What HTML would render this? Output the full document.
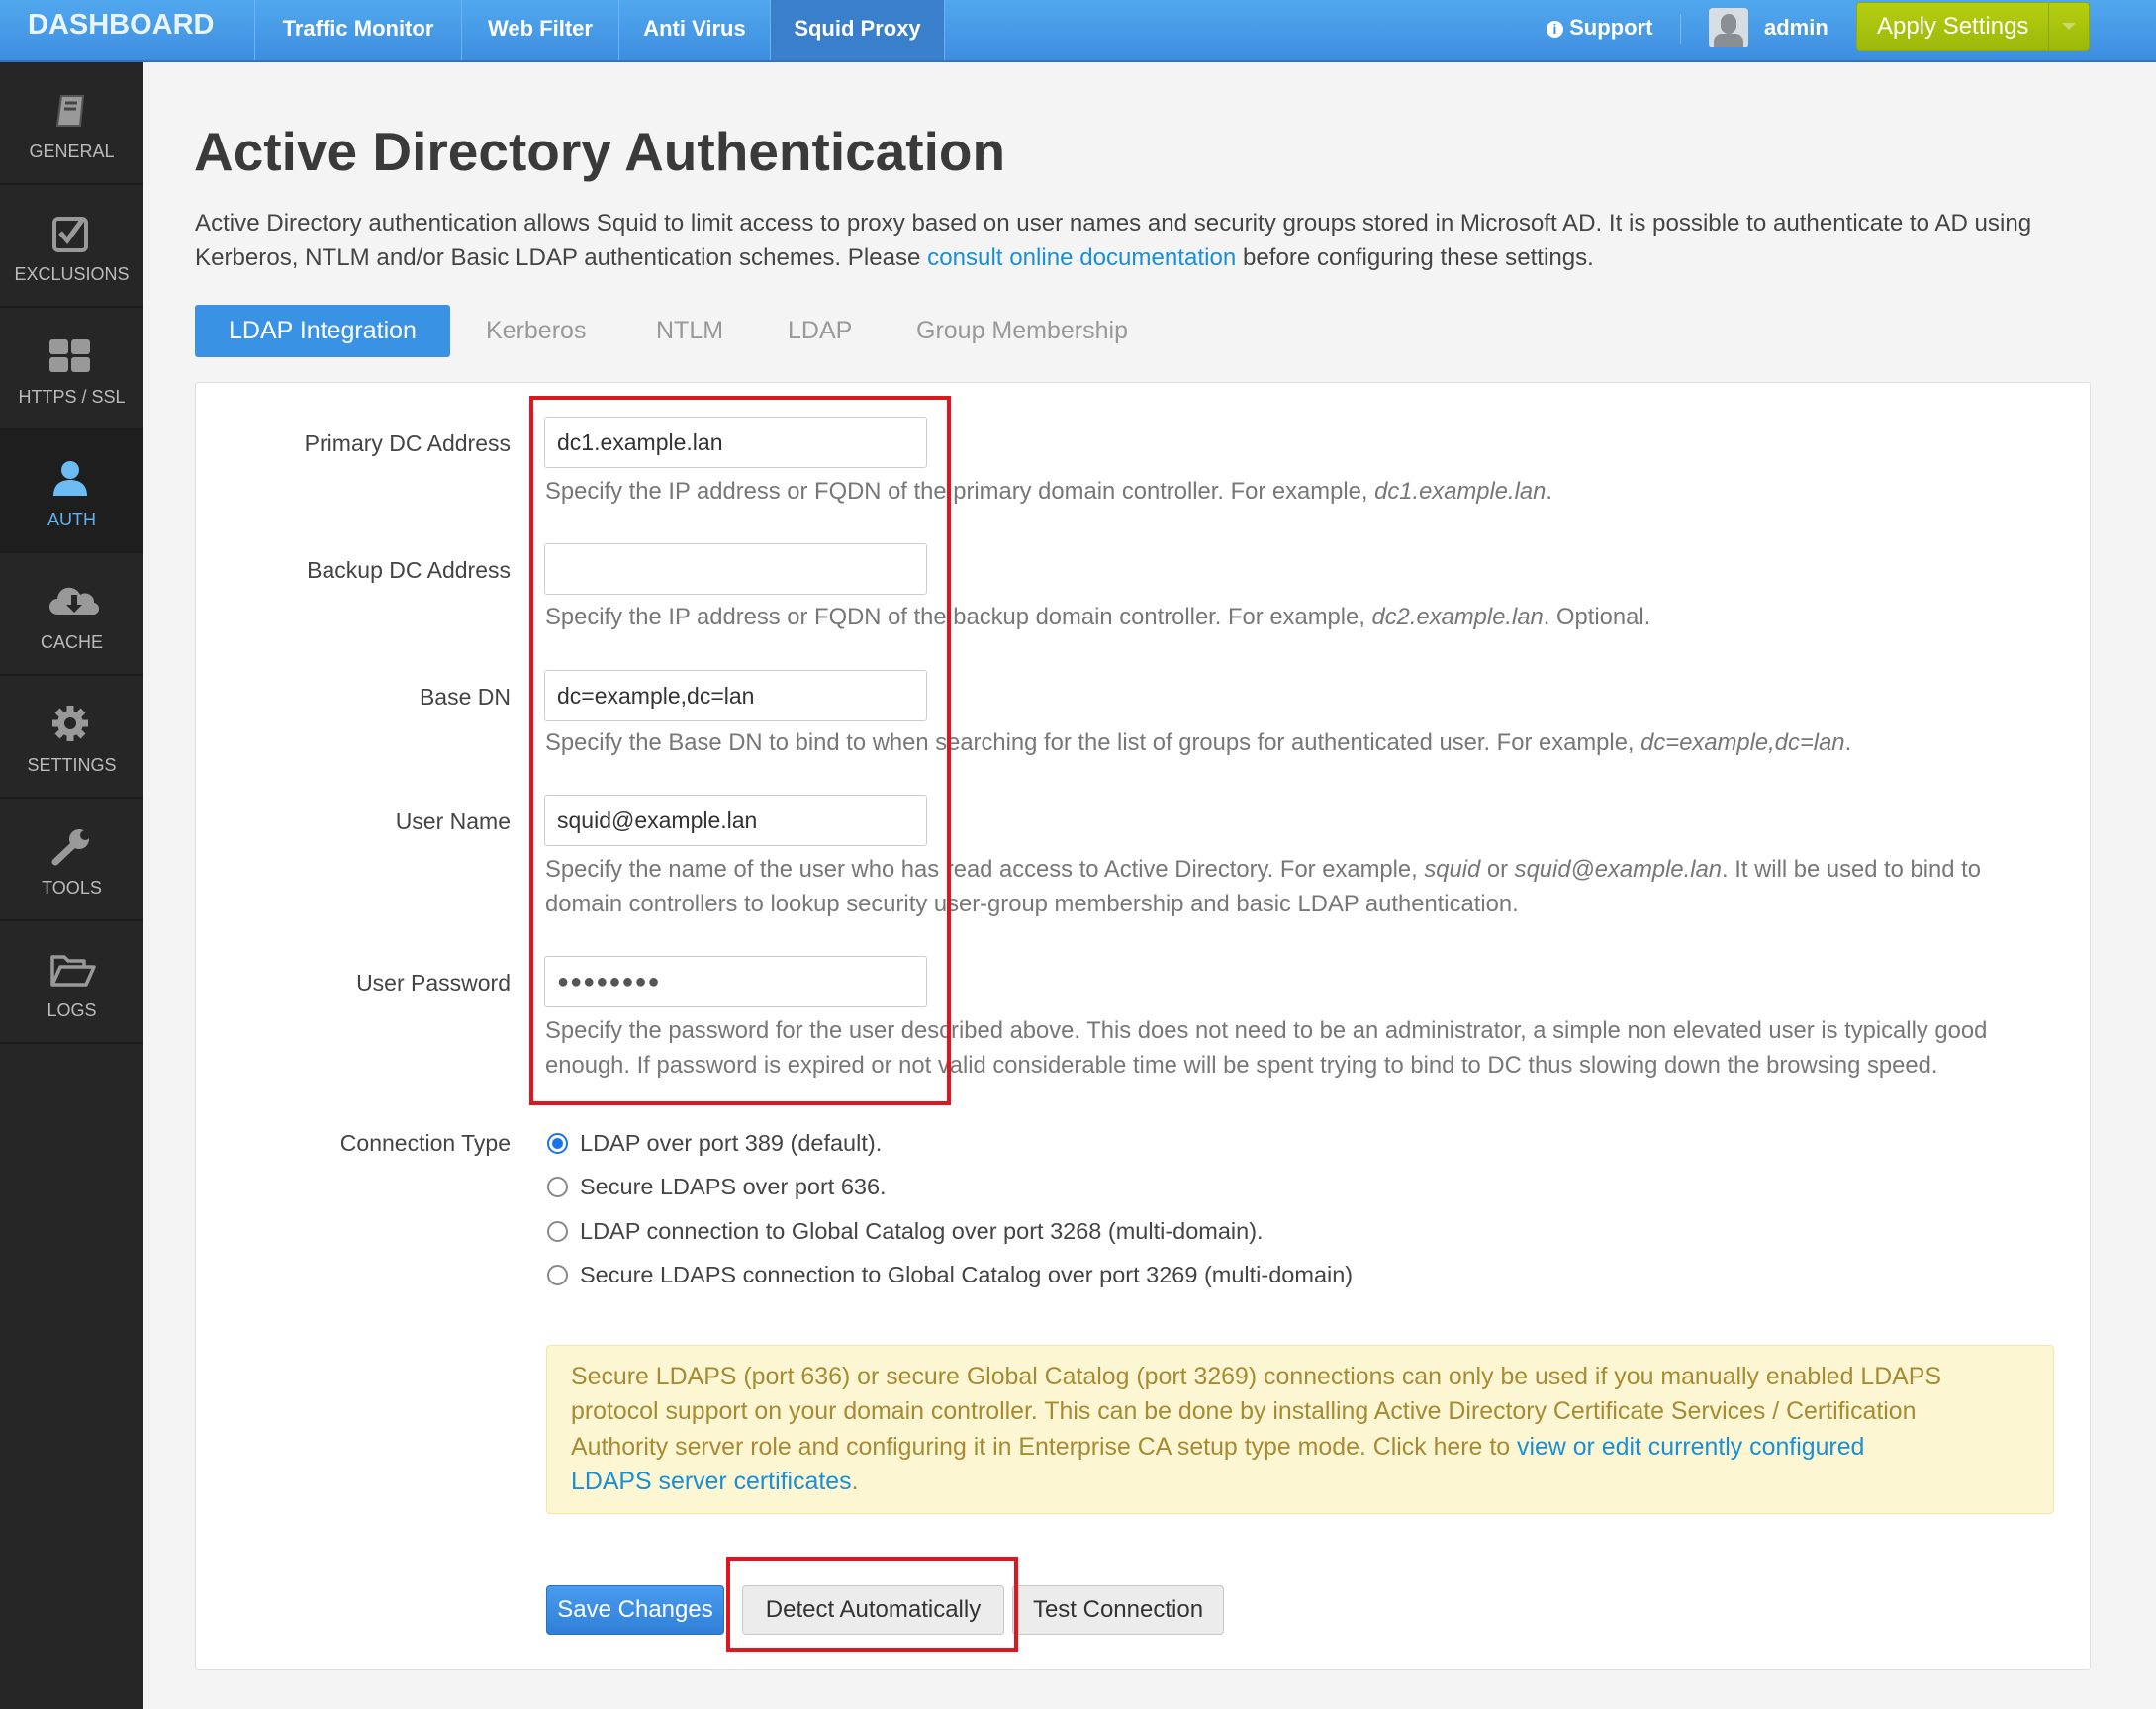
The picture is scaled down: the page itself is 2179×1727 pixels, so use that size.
<!DOCTYPE html>
<html><head><meta charset="utf-8"><style>
*{box-sizing:border-box;margin:0;padding:0}
body{width:2179px;height:1727px;overflow:hidden;background:#f4f4f4;font-family:"Liberation Sans",sans-serif;color:#444;position:relative}
.a{position:absolute;white-space:nowrap}
#nav{position:absolute;left:0;top:0;width:2179px;height:63px;background:linear-gradient(#51a8ee,#3e8ee0);border-bottom:2px solid #2f74c0}
.ni{position:absolute;top:0;height:61px;line-height:58px;color:#fff;font-size:22px;font-weight:bold;text-align:center;border-left:1px solid #6ab4f0}
#side{position:absolute;left:0;top:63px;width:145px;height:1664px;background:#262626}
.si{position:absolute;left:0;width:145px;height:124px;border-bottom:2px solid #1c1c1c;color:#bbb;font-size:18px;text-align:center}
.si span{position:absolute;left:0;right:0;top:80px}
.si svg{position:absolute;left:50px;top:26px}
.lab{position:absolute;right:1663px;font-size:23px;color:#444;line-height:34px}
.inp{position:absolute;left:550px;width:387px;height:52px;background:#fff;border:1px solid #ccc;border-radius:3px;font-size:23px;line-height:50px;padding-left:12px;color:#333}
.hl{position:absolute;left:551px;font-size:23.8px;color:#777;line-height:35px;white-space:nowrap}
.rad{position:absolute;left:552px;font-size:23.5px;color:#444;line-height:34px;padding-left:34px}
.rad i{position:absolute;left:1px;top:7px;width:21px;height:21px;border:2px solid #888;border-radius:50%;background:#fff}
.btn{position:absolute;top:1602px;height:50px;line-height:48px;font-size:24px;text-align:center;border-radius:4px}
.red{position:absolute;border:4px solid #e3141f}
</style></head><body>
<div id="nav">
<div class="a" style="left:28px;top:9px;font-size:29px;font-weight:bold;color:#eaf4ff;letter-spacing:0px">DASHBOARD</div>
<div class="ni" style="left:257px;width:209px">Traffic Monitor</div>
<div class="ni" style="left:466px;width:159px">Web Filter</div>
<div class="ni" style="left:625px;width:153px">Anti Virus</div>
<div class="ni" style="left:778px;width:177px;background:#3a7fcc;border-right:1px solid #6ab4f0">Squid Proxy</div>
<div class="a" style="left:1563px;top:15px;color:#fff;font-size:22px;font-weight:bold"><span style="display:inline-block;width:17px;height:17px;border-radius:50%;background:#fff;color:#3e8ee0;font-size:14px;text-align:center;line-height:17px;vertical-align:1px">i</span> Support</div>
<div class="a" style="left:1698px;top:14px;width:1px;height:30px;background:#7bbcf0"></div>
<div class="a" style="left:1727px;top:8px;width:40px;height:40px;border-radius:4px;background:#d8dde4;overflow:hidden"><div class="a" style="left:12px;top:6px;width:16px;height:20px;border-radius:8px;background:#8a8f96"></div><div class="a" style="left:5px;top:26px;width:30px;height:16px;border-radius:8px 8px 0 0;background:#8a8f96"></div></div>
<div class="a" style="left:1783px;top:15px;color:#fff;font-size:22px;font-weight:bold">admin</div>
<div class="a" style="left:1876px;top:2px;width:236px;height:50px;border-radius:4px;background:linear-gradient(#b5cf0e,#9cb80a);border:1px solid #8fa80a"></div>
<div class="a" style="left:1897px;top:13px;color:#fff;font-size:24px">Apply Settings</div>
<div class="a" style="left:2070px;top:3px;width:1px;height:48px;background:#8ea60a"></div>
<div class="a" style="left:2084px;top:23px;width:0;height:0;border-left:7px solid transparent;border-right:7px solid transparent;border-top:7px solid #c9d96a"></div>
</div>
<div id="side">
<div class="si" style="top:0"><svg width="45" height="45" viewBox="0 0 45 45"><path d="M12 8h22l-3 30H8z" fill="#999" stroke="#555" stroke-width="2"/><path d="M16 15h12M15 21h12" stroke="#444" stroke-width="3"/></svg><span>GENERAL</span></div>
<div class="si" style="top:124px"><svg width="45" height="45" viewBox="0 0 45 45"><rect x="5" y="8" width="32" height="32" rx="4" fill="none" stroke="#999" stroke-width="4"/><path d="M11 22l7 8 16-22" fill="none" stroke="#999" stroke-width="5"/></svg><span>EXCLUSIONS</span></div>
<div class="si" style="top:248px"><svg width="45" height="45" viewBox="0 0 45 45"><rect x="0" y="6" width="19" height="15" rx="3" fill="#999"/><rect x="22" y="6" width="19" height="15" rx="3" fill="#999"/><rect x="0" y="24" width="19" height="15" rx="3" fill="#999"/><rect x="22" y="24" width="19" height="15" rx="3" fill="#999"/></svg><span>HTTPS / SSL</span></div>
<div class="si" style="top:372px;background:#1e1e1e;color:#5fb3f0"><svg width="45" height="45" viewBox="0 0 45 45"><circle cx="21" cy="14" r="9" fill="#6bbcf5"/><path d="M4 40c0-12 8-16 17-16s17 4 17 16z" fill="#6bbcf5"/></svg><span>AUTH</span></div>
<div class="si" style="top:496px"><svg width="50" height="45" viewBox="0 0 50 45"><path d="M8 36a8 8 0 0 1 0-16 12 12 0 0 1 23-4 9 9 0 0 1 14 8 6 6 0 0 1-2 12z" fill="#999"/><path d="M22 16v10h-5l8 8 8-8h-5V16z" fill="#262626"/></svg><span>CACHE</span></div>
<div class="si" style="top:620px"><svg width="45" height="45" viewBox="0 0 45 45"><circle cx="21" cy="22" r="13" fill="#999"/><g stroke="#999" stroke-width="7"><path d="M21 4v36M3 22h36M8 9l26 26M34 9L8 35"/></g><circle cx="21" cy="22" r="6" fill="#262626"/></svg><span>SETTINGS</span></div>
<div class="si" style="top:744px"><svg width="45" height="45" viewBox="0 0 45 45"><path d="M6 38l18-17" stroke="#999" stroke-width="7" stroke-linecap="round"/><circle cx="30" cy="15" r="10" fill="#999"/><circle cx="36" cy="11" r="5" fill="#262626"/></svg><span>TOOLS</span></div>
<div class="si" style="top:868px"><svg width="50" height="45" viewBox="0 0 50 45"><path d="M3 38V10h12l4 4h16v6M3 38l8-18h34l-8 18z" fill="none" stroke="#999" stroke-width="3.5" stroke-linejoin="round"/></svg><span>LOGS</span></div>
</div>
<div class="a" style="left:196px;top:121px;font-size:55px;font-weight:bold;color:#3a3a3a">Active Directory Authentication</div>
<div class="a" style="left:197px;top:208px;font-size:24.1px;line-height:35px;color:#444">Active Directory authentication allows Squid to limit access to proxy based on user names and security groups stored in Microsoft AD. It is possible to authenticate to AD using<br>Kerberos, NTLM and/or Basic LDAP authentication schemes. Please <span style="color:#1a8fd6">consult online documentation</span> before configuring these settings.</div>
<div class="a" style="left:197px;top:308px;width:258px;height:53px;background:#3a92e4;border-radius:3px;color:#fff;font-size:25px;line-height:53px;text-align:center">LDAP Integration</div>
<div class="a" style="left:491px;top:320px;font-size:25px;color:#999">Kerberos</div>
<div class="a" style="left:663px;top:320px;font-size:25px;color:#999">NTLM</div>
<div class="a" style="left:796px;top:320px;font-size:25px;color:#999">LDAP</div>
<div class="a" style="left:926px;top:320px;font-size:25px;color:#999">Group Membership</div>
<div class="a" style="left:197px;top:386px;width:1916px;height:1302px;background:#fff;border:1px solid #e0e0e0;border-radius:3px"></div>

<div class="lab" style="top:431px">Primary DC Address</div>
<div class="inp" style="top:421px">dc1.example.lan</div>
<div class="hl" style="top:479px">Specify the IP address or FQDN of the primary domain controller. For example, <i>dc1.example.lan</i>.</div>
<div class="lab" style="top:559px">Backup DC Address</div>
<div class="inp" style="top:549px"></div>
<div class="hl" style="top:606px">Specify the IP address or FQDN of the backup domain controller. For example, <i>dc2.example.lan</i>. Optional.</div>
<div class="lab" style="top:687px">Base DN</div>
<div class="inp" style="top:677px">dc=example,dc=lan</div>
<div class="hl" style="top:733px">Specify the Base DN to bind to when searching for the list of groups for authenticated user. For example, <i>dc=example,dc=lan</i>.</div>
<div class="lab" style="top:813px">User Name</div>
<div class="inp" style="top:803px">squid@example.lan</div>
<div class="hl" style="top:861px">Specify the name of the user who has read access to Active Directory. For example, <i>squid</i> or <i>squid@example.lan</i>. It will be used to bind to<br>domain controllers to lookup security user-group membership and basic LDAP authentication.</div>
<div class="lab" style="top:976px">User Password</div>
<div class="inp" style="top:966px;font-size:20px;letter-spacing:1px;color:#555">●●●●●●●●</div>
<div class="hl" style="top:1024px">Specify the password for the user described above. This does not need to be an administrator, a simple non elevated user is typically good<br>enough. If password is expired or not valid considerable time will be spent trying to bind to DC thus slowing down the browsing speed.</div>
<div class="red" style="left:535px;top:400px;width:426px;height:717px"></div>

<div class="lab" style="top:1138px">Connection Type</div>
<div class="rad" style="top:1138px"><i style="border-color:#1a73e8;background:radial-gradient(#1a73e8 5px,#fff 6px)"></i>LDAP over port 389 (default).</div>
<div class="rad" style="top:1182px"><i></i>Secure LDAPS over port 636.</div>
<div class="rad" style="top:1227px"><i></i>LDAP connection to Global Catalog over port 3268 (multi-domain).</div>
<div class="rad" style="top:1271px"><i></i>Secure LDAPS connection to Global Catalog over port 3269 (multi-domain)</div>

<div class="a" style="left:552px;top:1359px;width:1524px;height:171px;background:#fdf6d3;border:1px solid #f3e6a8;border-radius:4px"></div>
<div class="a" style="left:577px;top:1374px;font-size:24.9px;line-height:35.3px;color:#a88a33">Secure LDAPS (port 636) or secure Global Catalog (port 3269) connections can only be used if you manually enabled LDAPS<br>protocol support on your domain controller. This can be done by installing Active Directory Certificate Services / Certification<br>Authority server role and configuring it in Enterprise CA setup type mode. Click here to <span style="color:#1a8fd6">view or edit currently configured</span><br><span style="color:#1a8fd6">LDAPS server certificates</span>.</div>

<div class="btn" style="left:552px;width:180px;background:linear-gradient(#4a9cf0,#2f7fd6);border:1px solid #2a6fbf;color:#fff">Save Changes</div>
<div class="btn" style="left:750px;width:265px;background:#ececec;border:1px solid #c8c8c8;color:#333">Detect Automatically</div>
<div class="btn" style="left:1023px;width:214px;background:#ececec;border:1px solid #c8c8c8;color:#333">Test Connection</div>
<div class="red" style="left:734px;top:1573px;width:295px;height:96px"></div>
</body></html>
